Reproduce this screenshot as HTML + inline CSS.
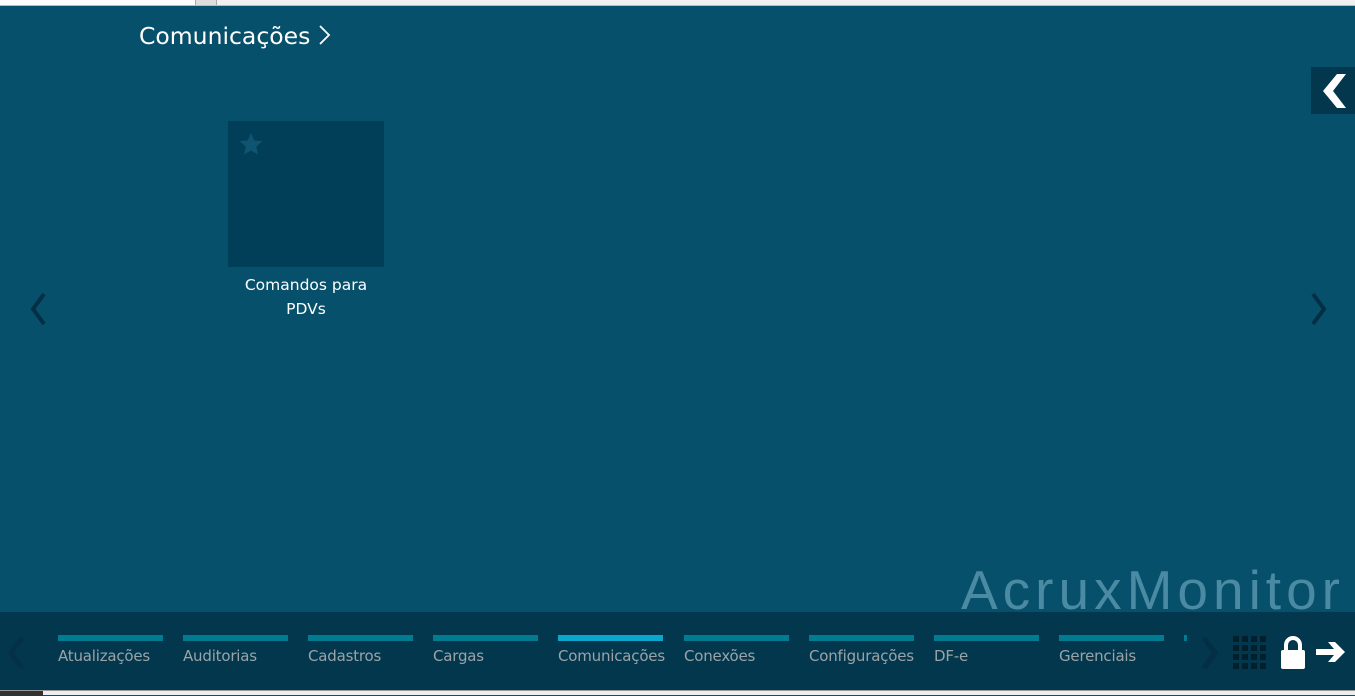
<!DOCTYPE html>
<html><head><meta charset="utf-8"><style>
*{margin:0;padding:0;box-sizing:border-box}
body{width:1355px;height:695px;overflow:hidden;background:#07506c;font-family:"DejaVu Sans","Liberation Sans",sans-serif;position:relative}
.top{position:absolute;left:0;top:0;width:1355px;height:6px;background:#fff;border-bottom:1px solid #bbb}
.top .s{position:absolute;left:195px;top:0;width:22px;height:5px;background:#ddd;border-left:1px solid #aaa;border-right:1px solid #aaa}
.top .r{position:absolute;left:217px;right:0;top:0;height:5px;background:#f0f0f0}
h1{position:absolute;left:139px;top:22px;font-weight:normal;font-size:23.5px;color:#fff}
.tile{position:absolute;left:228px;top:121px;width:156px;height:146px;background:#013e58}
.lbl{position:absolute;left:228px;top:273px;width:156px;text-align:center;color:#fff;font-size:15.5px;line-height:24px}
.back{position:absolute;left:1311px;top:67px;width:44px;height:47px;background:#03374d}
.logo{position:absolute;left:961px;top:558px;font-family:"Liberation Sans",sans-serif;font-size:55px;color:#4a8aa2;letter-spacing:5px;white-space:nowrap}
.bar{position:absolute;left:0;top:612px;width:1355px;height:78px;background:#03374d}
.bot{position:absolute;left:0;top:690px;width:1355px;height:5px;background:#eee;border-top:1px solid #999}
.bot i{position:absolute;left:0;top:0;width:43px;height:5px;background:#333}
.tab{position:absolute;top:635px;width:105px}
.tab b{display:block;height:6px;background:#027a8f}
.tab span{display:block;margin-top:6px;font-size:15px;color:#9aa4a8;white-space:nowrap;letter-spacing:-0.2px}
.tab.a b{background:#0aa6cb}
</style></head><body>
<div class="top"><div class="s"></div><div class="r"></div></div>
<h1>Comunicações <svg width="14" height="22" viewBox="0 0 14 22" style="vertical-align:-2px"><path d="M2 2 L11 11 L2 20" stroke="#fff" stroke-width="1.8" fill="none"/></svg></h1>
<div class="tile"><svg style="position:absolute;left:10px;top:11px" width="26" height="25" viewBox="0 0 24 24"><path d="M12 1l3.2 7.2 7.8.6-6 5.2 1.9 7.8L12 17.8 5.1 21.8 7 14 1 8.8l7.8-.6z" fill="#0f5470"/></svg></div>
<div class="lbl">Comandos para<br>PDVs</div>
<div class="back"><svg width="44" height="47" viewBox="0 0 44 47"><path d="M26 7 L12 24 L26 41 L35 41 L22 24 L35 7Z" fill="#fff"/></svg></div>
<svg style="position:absolute;left:28px;top:292px" width="20" height="34" viewBox="0 0 20 34"><path d="M16 2 L5 17 L16 32" stroke="#032f44" stroke-width="4" fill="none"/></svg>
<svg style="position:absolute;left:1309px;top:292px" width="20" height="34" viewBox="0 0 20 34"><path d="M4 2 L15 17 L4 32" stroke="#032f44" stroke-width="4" fill="none"/></svg>
<div class="logo">AcruxMonitor</div>
<div class="bar"></div>
<svg style="position:absolute;left:6px;top:636px" width="20" height="34" viewBox="0 0 20 34"><path d="M16 2 L5 17 L16 32" stroke="#04304a" stroke-width="5" fill="none"/></svg>
<div class="tab" style="left:58px"><b></b><span>Atualizações</span></div>
<div class="tab" style="left:183px"><b></b><span>Auditorias</span></div>
<div class="tab" style="left:308px"><b></b><span>Cadastros</span></div>
<div class="tab" style="left:433px"><b></b><span>Cargas</span></div>
<div class="tab a" style="left:558px"><b></b><span>Comunicações</span></div>
<div class="tab" style="left:684px"><b></b><span>Conexões</span></div>
<div class="tab" style="left:809px"><b></b><span>Configurações</span></div>
<div class="tab" style="left:934px"><b></b><span>DF-e</span></div>
<div class="tab" style="left:1059px"><b></b><span>Gerenciais</span></div>
<div style="position:absolute;left:1184px;top:635px;width:3px;height:6px;background:#027a8f"></div>
<div style="position:absolute;left:1190px;top:612px;width:165px;height:78px;background:#03374d"></div>
<svg style="position:absolute;left:1200px;top:636px" width="20" height="34" viewBox="0 0 20 34"><path d="M4 2 L15 17 L4 32" stroke="#042e44" stroke-width="5" fill="none"/></svg>
<svg style="position:absolute;left:1233px;top:636px" width="34" height="34" viewBox="0 0 34 34" fill="#021f2c">
<g id="r"><rect x="0" y="0" width="6" height="6"/><rect x="9" y="0" width="6" height="6"/><rect x="18" y="0" width="6" height="6"/><rect x="27" y="0" width="6" height="6"/></g>
<use href="#r" y="9"/><use href="#r" y="18"/><use href="#r" y="27"/></svg>
<svg style="position:absolute;left:1279px;top:636px" width="28" height="34" viewBox="0 0 28 34"><path d="M7 15 V9 a7 7 0 0 1 14 0 V15" stroke="#fff" stroke-width="4" fill="none"/><rect x="2" y="14" width="24" height="19" rx="2" fill="#fff"/></svg>
<svg style="position:absolute;left:1314px;top:638px" width="34" height="28" viewBox="0 0 34 28"><path d="M2 11 H20 L14 4 H21 L31 14 L21 24 H14 L20 17 H2Z" fill="#fff"/></svg>
<div class="bot"><i></i></div>
</body></html>
